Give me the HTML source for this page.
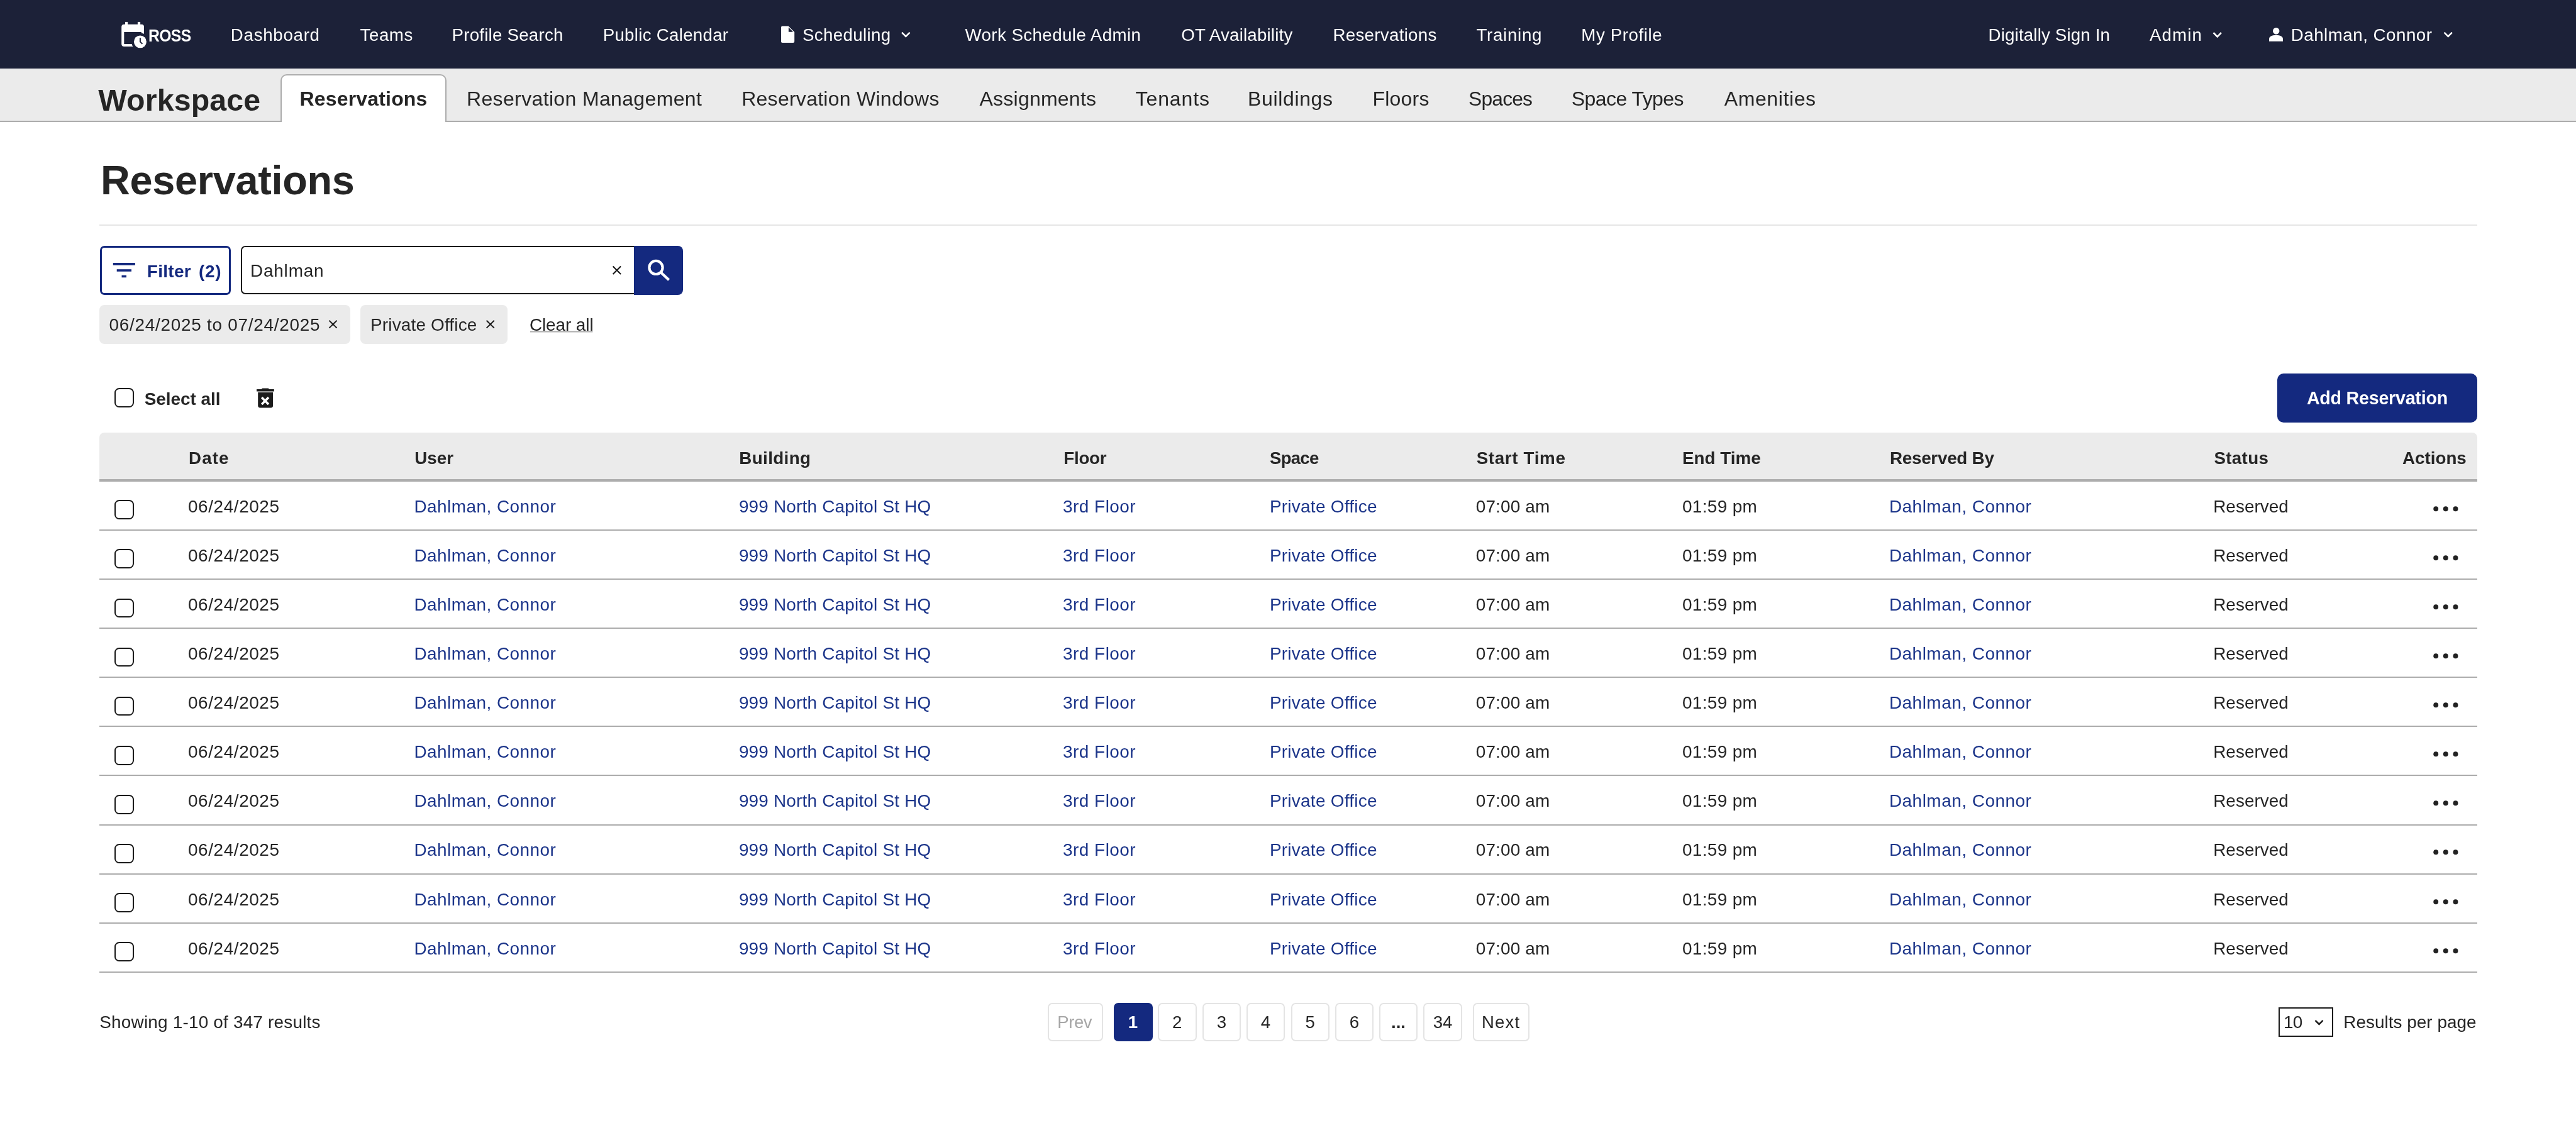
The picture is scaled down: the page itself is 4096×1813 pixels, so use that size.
<!DOCTYPE html>
<html><head><meta charset="utf-8"><title>Reservations</title>
<style>
html,body{margin:0;padding:0}
body{width:4096px;height:1813px;position:relative;overflow:hidden;background:#fff;font-family:"Liberation Sans",sans-serif}
.t{position:absolute;line-height:1;white-space:nowrap;transform-origin:0 0}
.r{position:absolute;box-sizing:border-box}
.cb{position:absolute;box-sizing:border-box;width:30.7px;height:30.8px;border:2px solid #1b1b1b;border-radius:7.5px;background:#fff}
.sep{position:absolute;left:158.2px;width:3780.8px;height:2px;background:#acacac}
.dots{position:absolute;fill:#222}
.pb{position:absolute;box-sizing:border-box;top:1595px;height:61px;border:2px solid #e4e4e4;border-radius:7px;background:#fff}
.pn{position:absolute;top:1595px;height:61px;line-height:61px;text-align:center;font-size:27.6px}
svg{position:absolute;overflow:visible}
</style></head>
<body>
<!-- header -->
<div class="r" style="left:0;top:0;width:4096px;height:109.3px;background:#1c2138"></div>
<!-- subnav -->
<div class="r" style="left:0;top:109.3px;width:4096px;height:84.7px;background:#ebebeb"></div>
<div class="r" style="left:0;top:192px;width:4096px;height:2px;background:#adadad"></div>
<div class="r" style="left:446.4px;top:117.5px;width:264px;height:76.5px;background:#fff;border:2px solid #adadad;border-bottom:none;border-radius:10px 10px 0 0"></div>

<!-- logo -->
<svg style="left:0;top:0" width="260" height="100" viewBox="0 0 260 100">
  <path fill="#fff" fill-rule="evenodd" d="M197.2,38.8 H225 a4,4 0 0 1 4,4 V70.1 a4,4 0 0 1 -4,4 H197.2 a4,4 0 0 1 -4,-4 V42.8 a4,4 0 0 1 4,-4 Z M197.3,51.05 V69.9 H224.8 V51.05 Z"/>
  <rect fill="#fff" x="199" y="34.9" width="4.1" height="5"/>
  <rect fill="#fff" x="218.9" y="34.9" width="4.2" height="5"/>
  <circle fill="#1c2138" cx="222.9" cy="66.4" r="13.8"/>
  <circle fill="#fff" cx="222.9" cy="66.4" r="9.95"/>
  <path fill="none" stroke="#1c2138" stroke-width="2" d="M222.9,60.3 V66.4 L226.4,69.9"/>
</svg>
<!-- doc icon -->
<svg style="left:0;top:0" width="1500" height="100" viewBox="0 0 1500 100">
  <path fill="#fff" d="M1244,41.5 H1253.6 L1263.2,51 V65.9 a2,2 0 0 1 -2,2 H1244 a2,2 0 0 1 -2,-2 V43.5 a2,2 0 0 1 2,-2 Z"/>
  <path fill="#1c2138" d="M1253.9,43.6 V50.8 H1261.1 Z"/>
  <polyline fill="none" stroke="#fff" stroke-width="2.6" points="1434,51.6 1440.3,58 1446.6,51.6"/>
</svg>
<svg style="left:3400px;top:0" width="600" height="100" viewBox="3400 0 600 100">
  <polyline fill="none" stroke="#fff" stroke-width="2.6" points="3519.5,52 3525.7,58.3 3531.9,52"/>
  <polyline fill="none" stroke="#fff" stroke-width="2.6" points="3886.5,51.7 3892.7,58 3898.9,51.7"/>
  <circle fill="#fff" cx="3619.2" cy="49.3" r="5.2"/>
  <path fill="#fff" d="M3608,65.7 V62.5 Q3608,55.7 3619,55.7 Q3630,55.7 3630,62.5 V65.7 Z"/>
</svg>

<!-- hr -->
<div class="r" style="left:158.2px;top:357.2px;width:3780.8px;height:2px;background:#e6e6e6"></div>

<!-- filter button -->
<div class="r" style="left:158.5px;top:390.9px;width:208.5px;height:77.9px;border:3.4px solid #14297f;border-radius:7px"></div>
<svg style="left:0;top:0" width="1100" height="480" viewBox="0 0 1100 480">
  <rect fill="#14297f" x="179.8" y="418" width="35.1" height="3.9"/>
  <rect fill="#14297f" x="185.7" y="428.2" width="23.3" height="3.6"/>
  <rect fill="#14297f" x="193.5" y="437.8" width="7.5" height="3.5"/>
</svg>
<!-- search input -->
<div class="r" style="left:383.4px;top:391.2px;width:640px;height:77.3px;border:2px solid #1b1b1b;border-radius:7px 0 0 7px"></div>
<div class="r" style="left:1008.3px;top:391px;width:78.1px;height:77.6px;background:#14297f;border-radius:0 8px 8px 0"></div>
<svg style="left:0;top:0" width="1100" height="480" viewBox="0 0 1100 480">
  <path fill="none" stroke="#1b1b1b" stroke-width="2.1" d="M974.6,423.6 L987.1,436 M987.1,423.6 L974.6,436"/>
  <circle fill="none" stroke="#fff" stroke-width="4.2" cx="1043" cy="425.4" r="10.6"/>
  <path fill="none" stroke="#fff" stroke-width="4.3" d="M1050.8,433.2 L1063.6,445.2"/>
</svg>

<!-- chips -->
<div class="r" style="left:158.2px;top:484.8px;width:398.6px;height:61.9px;background:#ebebeb;border-radius:8px"></div>
<div class="r" style="left:572.7px;top:484.8px;width:234.3px;height:61.9px;background:#ebebeb;border-radius:8px"></div>
<svg style="left:0;top:0" width="1100" height="560" viewBox="0 0 1100 560">
  <path fill="none" stroke="#1b1b1b" stroke-width="2" d="M523.4,509.8 L535.6,521.6 M535.6,509.8 L523.4,521.6"/>
  <path fill="none" stroke="#1b1b1b" stroke-width="2" d="M773.6,509.8 L785.8,521.6 M785.8,509.8 L773.6,521.6"/>
  <rect fill="#adadad" x="842.9" y="526.5" width="99.5" height="2"/>
</svg>

<!-- select all -->
<div class="cb" style="left:182px;top:617.4px"></div>
<svg style="left:0;top:0" width="500" height="700" viewBox="0 0 500 700">
  <path fill="#1b1b1b" d="M417.5,617.4 H426.3 a1.5,1.5 0 0 1 1.5,1.6 H435.8 V622.6 H408 V619 H416 a1.5,1.5 0 0 1 1.5,-1.6 Z"/>
  <path fill="#1b1b1b" d="M410.2,624.1 H434.1 V645 a3.4,3.4 0 0 1 -3.4,3.4 H413.6 a3.4,3.4 0 0 1 -3.4,-3.4 Z"/>
  <path fill="none" stroke="#fff" stroke-width="3.6" d="M416.2,632.1 L427,642.9 M427,632.1 L416.2,642.9"/>
</svg>
<!-- add reservation -->
<div class="r" style="left:3621px;top:594px;width:318px;height:78px;background:#14297f;border-radius:10px"></div>

<!-- table header -->
<div class="r" style="left:158.2px;top:687.6px;width:3780.8px;height:74.5px;background:#ebebeb;border-radius:8px 8px 0 0"></div>
<div class="r" style="left:158.2px;top:762.1px;width:3780.8px;height:3.6px;background:#adadad"></div>
<div class="cb" style="left:182px;top:795.2px"></div>
<div class="sep" style="top:841.8px"></div>
<svg class="dots" style="left:3866px;top:802.5px" width="46" height="12" viewBox="0 0 46 12"><circle cx="7.2" cy="6.3" r="3.95"/><circle cx="22.8" cy="6.3" r="3.95"/><circle cx="38.5" cy="6.3" r="3.95"/></svg>
<div class="cb" style="left:182px;top:873.3px"></div>
<div class="sep" style="top:919.9px"></div>
<svg class="dots" style="left:3866px;top:880.6px" width="46" height="12" viewBox="0 0 46 12"><circle cx="7.2" cy="6.3" r="3.95"/><circle cx="22.8" cy="6.3" r="3.95"/><circle cx="38.5" cy="6.3" r="3.95"/></svg>
<div class="cb" style="left:182px;top:951.5px"></div>
<div class="sep" style="top:998.1px"></div>
<svg class="dots" style="left:3866px;top:958.8px" width="46" height="12" viewBox="0 0 46 12"><circle cx="7.2" cy="6.3" r="3.95"/><circle cx="22.8" cy="6.3" r="3.95"/><circle cx="38.5" cy="6.3" r="3.95"/></svg>
<div class="cb" style="left:182px;top:1029.6px"></div>
<div class="sep" style="top:1076.2px"></div>
<svg class="dots" style="left:3866px;top:1036.9px" width="46" height="12" viewBox="0 0 46 12"><circle cx="7.2" cy="6.3" r="3.95"/><circle cx="22.8" cy="6.3" r="3.95"/><circle cx="38.5" cy="6.3" r="3.95"/></svg>
<div class="cb" style="left:182px;top:1107.7px"></div>
<div class="sep" style="top:1154.3px"></div>
<svg class="dots" style="left:3866px;top:1115.0px" width="46" height="12" viewBox="0 0 46 12"><circle cx="7.2" cy="6.3" r="3.95"/><circle cx="22.8" cy="6.3" r="3.95"/><circle cx="38.5" cy="6.3" r="3.95"/></svg>
<div class="cb" style="left:182px;top:1185.8px"></div>
<div class="sep" style="top:1232.4px"></div>
<svg class="dots" style="left:3866px;top:1193.2px" width="46" height="12" viewBox="0 0 46 12"><circle cx="7.2" cy="6.3" r="3.95"/><circle cx="22.8" cy="6.3" r="3.95"/><circle cx="38.5" cy="6.3" r="3.95"/></svg>
<div class="cb" style="left:182px;top:1264.0px"></div>
<div class="sep" style="top:1310.6px"></div>
<svg class="dots" style="left:3866px;top:1271.3px" width="46" height="12" viewBox="0 0 46 12"><circle cx="7.2" cy="6.3" r="3.95"/><circle cx="22.8" cy="6.3" r="3.95"/><circle cx="38.5" cy="6.3" r="3.95"/></svg>
<div class="cb" style="left:182px;top:1342.1px"></div>
<div class="sep" style="top:1388.7px"></div>
<svg class="dots" style="left:3866px;top:1349.4px" width="46" height="12" viewBox="0 0 46 12"><circle cx="7.2" cy="6.3" r="3.95"/><circle cx="22.8" cy="6.3" r="3.95"/><circle cx="38.5" cy="6.3" r="3.95"/></svg>
<div class="cb" style="left:182px;top:1420.2px"></div>
<div class="sep" style="top:1466.8px"></div>
<svg class="dots" style="left:3866px;top:1427.5px" width="46" height="12" viewBox="0 0 46 12"><circle cx="7.2" cy="6.3" r="3.95"/><circle cx="22.8" cy="6.3" r="3.95"/><circle cx="38.5" cy="6.3" r="3.95"/></svg>
<div class="cb" style="left:182px;top:1498.4px"></div>
<div class="sep" style="top:1545.0px"></div>
<svg class="dots" style="left:3866px;top:1505.7px" width="46" height="12" viewBox="0 0 46 12"><circle cx="7.2" cy="6.3" r="3.95"/><circle cx="22.8" cy="6.3" r="3.95"/><circle cx="38.5" cy="6.3" r="3.95"/></svg>

<!-- pagination -->
<div class="pb" style="left:1665.5px;width:88.5px"></div>
<div class="pb" style="left:1770.5px;width:62.1px;background:#14297f;border-color:#14297f"></div>
<div class="pb" style="left:1841.0px;width:61.5px"></div>
<div class="pb" style="left:1912.0px;width:61.0px"></div>
<div class="pb" style="left:1982.0px;width:61.0px"></div>
<div class="pb" style="left:2052.5px;width:61.2px"></div>
<div class="pb" style="left:2122.7px;width:61.3px"></div>
<div class="pb" style="left:2193.0px;width:61.0px"></div>
<div class="pb" style="left:2263.0px;width:62.0px"></div>
<div class="pb" style="left:2342.0px;width:90.0px"></div>
<div class="r" style="left:3623.2px;top:1602.1px;width:87.3px;height:46.5px;border:2px solid #1b1b1b"></div>
<svg style="left:0;top:0" width="4096" height="1813" viewBox="0 0 4096 1813">
  <polyline fill="none" stroke="#1b1b1b" stroke-width="2.6" points="3681.5,1622.8 3687.5,1628.8 3693.5,1622.8"/>
</svg>

<div style="position:absolute;left:0;top:0;width:4096px;height:1813px;will-change:transform">
<div class="t" style="left:235.6px;top:42.6px;font-size:27.33px;letter-spacing:-0.68px;color:#ffffff;font-weight:700;transform:scaleX(0.9047)">ROSS</div>
<div class="t" style="left:366.8px;top:42.4px;font-size:27.69px;letter-spacing:0.72px;color:#ffffff;font-weight:400">Dashboard</div>
<div class="t" style="left:572.6px;top:42.4px;font-size:27.69px;letter-spacing:0.52px;color:#ffffff;font-weight:400">Teams</div>
<div class="t" style="left:718.5px;top:42.4px;font-size:27.69px;letter-spacing:0.23px;color:#ffffff;font-weight:400">Profile Search</div>
<div class="t" style="left:958.7px;top:42.4px;font-size:27.69px;letter-spacing:0.28px;color:#ffffff;font-weight:400">Public Calendar</div>
<div class="t" style="left:1275.9px;top:42.4px;font-size:27.69px;letter-spacing:0.37px;color:#ffffff;font-weight:400">Scheduling</div>
<div class="t" style="left:1534.5px;top:42.4px;font-size:27.69px;letter-spacing:0.42px;color:#ffffff;font-weight:400">Work Schedule Admin</div>
<div class="t" style="left:1878.2px;top:42.4px;font-size:27.69px;letter-spacing:0.19px;color:#ffffff;font-weight:400">OT Availability</div>
<div class="t" style="left:2119.4px;top:42.4px;font-size:27.69px;letter-spacing:0.31px;color:#ffffff;font-weight:400">Reservations</div>
<div class="t" style="left:2347.4px;top:42.4px;font-size:27.69px;letter-spacing:0.73px;color:#ffffff;font-weight:400">Training</div>
<div class="t" style="left:2514.3px;top:42.4px;font-size:27.69px;letter-spacing:0.59px;color:#ffffff;font-weight:400">My Profile</div>
<div class="t" style="left:3161.6px;top:42.4px;font-size:27.69px;letter-spacing:0.16px;color:#ffffff;font-weight:400">Digitally Sign In</div>
<div class="t" style="left:3418.0px;top:42.4px;font-size:27.69px;letter-spacing:1.10px;color:#ffffff;font-weight:400">Admin</div>
<div class="t" style="left:3642.8px;top:42.4px;font-size:27.69px;letter-spacing:0.51px;color:#ffffff;font-weight:400">Dahlman, Connor</div>
<div class="t" style="left:156.3px;top:134.6px;font-size:48.26px;letter-spacing:0.15px;color:#252525;font-weight:700">Workspace</div>
<div class="t" style="left:476.6px;top:141.4px;font-size:31.98px;letter-spacing:0.18px;color:#252525;font-weight:700">Reservations</div>
<div class="t" style="left:742.0px;top:141.4px;font-size:31.98px;letter-spacing:0.37px;color:#252525;font-weight:400">Reservation Management</div>
<div class="t" style="left:1179.2px;top:141.4px;font-size:31.98px;letter-spacing:0.28px;color:#252525;font-weight:400">Reservation Windows</div>
<div class="t" style="left:1557.5px;top:141.4px;font-size:31.98px;letter-spacing:0.25px;color:#252525;font-weight:400">Assignments</div>
<div class="t" style="left:1805.6px;top:141.4px;font-size:31.98px;letter-spacing:0.90px;color:#252525;font-weight:400">Tenants</div>
<div class="t" style="left:1984.0px;top:141.4px;font-size:31.98px;letter-spacing:0.66px;color:#252525;font-weight:400">Buildings</div>
<div class="t" style="left:2182.4px;top:141.4px;font-size:31.98px;letter-spacing:0.25px;color:#252525;font-weight:400">Floors</div>
<div class="t" style="left:2334.8px;top:141.4px;font-size:31.98px;letter-spacing:-0.80px;color:#252525;font-weight:400;transform:scaleX(0.9936)">Spaces</div>
<div class="t" style="left:2498.8px;top:141.4px;font-size:31.98px;letter-spacing:-0.55px;color:#252525;font-weight:400">Space Types</div>
<div class="t" style="left:2741.7px;top:141.4px;font-size:31.98px;letter-spacing:0.62px;color:#252525;font-weight:400">Amenities</div>
<div class="t" style="left:159.9px;top:254.5px;font-size:64.83px;letter-spacing:-0.29px;color:#252525;font-weight:700">Reservations</div>
<div class="t" style="left:233.8px;top:417.5px;font-size:27.91px;letter-spacing:0.31px;color:#14297f;font-weight:700">Filter</div>
<div class="t" style="left:315.9px;top:417.5px;font-size:27.91px;letter-spacing:0.79px;color:#14297f;font-weight:700">(2)</div>
<div class="t" style="left:398.0px;top:417.3px;font-size:27.91px;letter-spacing:0.81px;color:#252525;font-weight:400">Dahlman</div>
<div class="t" style="left:173.5px;top:502.5px;font-size:27.91px;letter-spacing:0.73px;color:#252525;font-weight:400">06/24/2025 to 07/24/2025</div>
<div class="t" style="left:589.0px;top:502.5px;font-size:27.91px;letter-spacing:0.18px;color:#252525;font-weight:400">Private Office</div>
<div class="t" style="left:841.9px;top:502.5px;font-size:27.91px;letter-spacing:-0.08px;color:#252525;font-weight:400">Clear all</div>
<div class="t" style="left:229.7px;top:620.7px;font-size:27.91px;letter-spacing:-0.02px;color:#252525;font-weight:700">Select all</div>
<div class="t" style="left:3667.9px;top:619.4px;font-size:28.63px;letter-spacing:-0.23px;color:#ffffff;font-weight:700">Add Reservation</div>
<div class="t" style="left:300.1px;top:714.5px;font-size:27.76px;letter-spacing:1.03px;color:#252525;font-weight:700">Date</div>
<div class="t" style="left:659.2px;top:714.5px;font-size:27.76px;letter-spacing:0.03px;color:#252525;font-weight:700">User</div>
<div class="t" style="left:1175.3px;top:714.5px;font-size:27.76px;letter-spacing:0.38px;color:#252525;font-weight:700">Building</div>
<div class="t" style="left:1691.3px;top:714.5px;font-size:27.76px;letter-spacing:-0.27px;color:#252525;font-weight:700">Floor</div>
<div class="t" style="left:2019.2px;top:714.5px;font-size:27.76px;letter-spacing:-0.69px;color:#252525;font-weight:700;transform:scaleX(0.9904)">Space</div>
<div class="t" style="left:2347.7px;top:714.5px;font-size:27.76px;letter-spacing:0.66px;color:#252525;font-weight:700">Start Time</div>
<div class="t" style="left:2675.0px;top:714.5px;font-size:27.76px;letter-spacing:0.05px;color:#252525;font-weight:700">End Time</div>
<div class="t" style="left:3004.9px;top:714.5px;font-size:27.76px;letter-spacing:-0.22px;color:#252525;font-weight:700">Reserved By</div>
<div class="t" style="left:3520.4px;top:714.5px;font-size:27.76px;letter-spacing:0.34px;color:#252525;font-weight:700">Status</div>
<div class="t" style="left:3820.0px;top:714.5px;font-size:27.76px;letter-spacing:-0.00px;color:#252525;font-weight:700">Actions</div>
<div class="t" style="left:299.0px;top:791.5px;font-size:27.91px;letter-spacing:0.59px;color:#252525;font-weight:400">06/24/2025</div>
<div class="t" style="left:658.4px;top:791.5px;font-size:27.91px;letter-spacing:0.48px;color:#1c358a;font-weight:400">Dahlman, Connor</div>
<div class="t" style="left:1174.9px;top:791.5px;font-size:27.91px;letter-spacing:0.20px;color:#1c358a;font-weight:400">999 North Capitol St HQ</div>
<div class="t" style="left:1690.0px;top:791.5px;font-size:27.91px;letter-spacing:0.50px;color:#1c358a;font-weight:400">3rd Floor</div>
<div class="t" style="left:2018.9px;top:791.5px;font-size:27.91px;letter-spacing:0.28px;color:#1c358a;font-weight:400">Private Office</div>
<div class="t" style="left:2346.7px;top:791.5px;font-size:27.91px;letter-spacing:0.17px;color:#252525;font-weight:400">07:00 am</div>
<div class="t" style="left:2675.0px;top:791.5px;font-size:27.91px;letter-spacing:0.34px;color:#252525;font-weight:400">01:59 pm</div>
<div class="t" style="left:3003.9px;top:791.5px;font-size:27.91px;letter-spacing:0.52px;color:#1c358a;font-weight:400">Dahlman, Connor</div>
<div class="t" style="left:3519.2px;top:791.5px;font-size:27.91px;letter-spacing:0.03px;color:#252525;font-weight:400">Reserved</div>
<div class="t" style="left:299.0px;top:869.6px;font-size:27.91px;letter-spacing:0.59px;color:#252525;font-weight:400">06/24/2025</div>
<div class="t" style="left:658.4px;top:869.6px;font-size:27.91px;letter-spacing:0.48px;color:#1c358a;font-weight:400">Dahlman, Connor</div>
<div class="t" style="left:1174.9px;top:869.6px;font-size:27.91px;letter-spacing:0.20px;color:#1c358a;font-weight:400">999 North Capitol St HQ</div>
<div class="t" style="left:1690.0px;top:869.6px;font-size:27.91px;letter-spacing:0.50px;color:#1c358a;font-weight:400">3rd Floor</div>
<div class="t" style="left:2018.9px;top:869.6px;font-size:27.91px;letter-spacing:0.28px;color:#1c358a;font-weight:400">Private Office</div>
<div class="t" style="left:2346.7px;top:869.6px;font-size:27.91px;letter-spacing:0.17px;color:#252525;font-weight:400">07:00 am</div>
<div class="t" style="left:2675.0px;top:869.6px;font-size:27.91px;letter-spacing:0.34px;color:#252525;font-weight:400">01:59 pm</div>
<div class="t" style="left:3003.9px;top:869.6px;font-size:27.91px;letter-spacing:0.52px;color:#1c358a;font-weight:400">Dahlman, Connor</div>
<div class="t" style="left:3519.2px;top:869.6px;font-size:27.91px;letter-spacing:0.03px;color:#252525;font-weight:400">Reserved</div>
<div class="t" style="left:299.0px;top:947.7px;font-size:27.91px;letter-spacing:0.59px;color:#252525;font-weight:400">06/24/2025</div>
<div class="t" style="left:658.4px;top:947.7px;font-size:27.91px;letter-spacing:0.48px;color:#1c358a;font-weight:400">Dahlman, Connor</div>
<div class="t" style="left:1174.9px;top:947.7px;font-size:27.91px;letter-spacing:0.20px;color:#1c358a;font-weight:400">999 North Capitol St HQ</div>
<div class="t" style="left:1690.0px;top:947.7px;font-size:27.91px;letter-spacing:0.50px;color:#1c358a;font-weight:400">3rd Floor</div>
<div class="t" style="left:2018.9px;top:947.7px;font-size:27.91px;letter-spacing:0.28px;color:#1c358a;font-weight:400">Private Office</div>
<div class="t" style="left:2346.7px;top:947.7px;font-size:27.91px;letter-spacing:0.17px;color:#252525;font-weight:400">07:00 am</div>
<div class="t" style="left:2675.0px;top:947.7px;font-size:27.91px;letter-spacing:0.34px;color:#252525;font-weight:400">01:59 pm</div>
<div class="t" style="left:3003.9px;top:947.7px;font-size:27.91px;letter-spacing:0.52px;color:#1c358a;font-weight:400">Dahlman, Connor</div>
<div class="t" style="left:3519.2px;top:947.7px;font-size:27.91px;letter-spacing:0.03px;color:#252525;font-weight:400">Reserved</div>
<div class="t" style="left:299.0px;top:1025.9px;font-size:27.91px;letter-spacing:0.59px;color:#252525;font-weight:400">06/24/2025</div>
<div class="t" style="left:658.4px;top:1025.9px;font-size:27.91px;letter-spacing:0.48px;color:#1c358a;font-weight:400">Dahlman, Connor</div>
<div class="t" style="left:1174.9px;top:1025.9px;font-size:27.91px;letter-spacing:0.20px;color:#1c358a;font-weight:400">999 North Capitol St HQ</div>
<div class="t" style="left:1690.0px;top:1025.9px;font-size:27.91px;letter-spacing:0.50px;color:#1c358a;font-weight:400">3rd Floor</div>
<div class="t" style="left:2018.9px;top:1025.9px;font-size:27.91px;letter-spacing:0.28px;color:#1c358a;font-weight:400">Private Office</div>
<div class="t" style="left:2346.7px;top:1025.9px;font-size:27.91px;letter-spacing:0.17px;color:#252525;font-weight:400">07:00 am</div>
<div class="t" style="left:2675.0px;top:1025.9px;font-size:27.91px;letter-spacing:0.34px;color:#252525;font-weight:400">01:59 pm</div>
<div class="t" style="left:3003.9px;top:1025.9px;font-size:27.91px;letter-spacing:0.52px;color:#1c358a;font-weight:400">Dahlman, Connor</div>
<div class="t" style="left:3519.2px;top:1025.9px;font-size:27.91px;letter-spacing:0.03px;color:#252525;font-weight:400">Reserved</div>
<div class="t" style="left:299.0px;top:1104.0px;font-size:27.91px;letter-spacing:0.59px;color:#252525;font-weight:400">06/24/2025</div>
<div class="t" style="left:658.4px;top:1104.0px;font-size:27.91px;letter-spacing:0.48px;color:#1c358a;font-weight:400">Dahlman, Connor</div>
<div class="t" style="left:1174.9px;top:1104.0px;font-size:27.91px;letter-spacing:0.20px;color:#1c358a;font-weight:400">999 North Capitol St HQ</div>
<div class="t" style="left:1690.0px;top:1104.0px;font-size:27.91px;letter-spacing:0.50px;color:#1c358a;font-weight:400">3rd Floor</div>
<div class="t" style="left:2018.9px;top:1104.0px;font-size:27.91px;letter-spacing:0.28px;color:#1c358a;font-weight:400">Private Office</div>
<div class="t" style="left:2346.7px;top:1104.0px;font-size:27.91px;letter-spacing:0.17px;color:#252525;font-weight:400">07:00 am</div>
<div class="t" style="left:2675.0px;top:1104.0px;font-size:27.91px;letter-spacing:0.34px;color:#252525;font-weight:400">01:59 pm</div>
<div class="t" style="left:3003.9px;top:1104.0px;font-size:27.91px;letter-spacing:0.52px;color:#1c358a;font-weight:400">Dahlman, Connor</div>
<div class="t" style="left:3519.2px;top:1104.0px;font-size:27.91px;letter-spacing:0.03px;color:#252525;font-weight:400">Reserved</div>
<div class="t" style="left:299.0px;top:1182.1px;font-size:27.91px;letter-spacing:0.59px;color:#252525;font-weight:400">06/24/2025</div>
<div class="t" style="left:658.4px;top:1182.1px;font-size:27.91px;letter-spacing:0.48px;color:#1c358a;font-weight:400">Dahlman, Connor</div>
<div class="t" style="left:1174.9px;top:1182.1px;font-size:27.91px;letter-spacing:0.20px;color:#1c358a;font-weight:400">999 North Capitol St HQ</div>
<div class="t" style="left:1690.0px;top:1182.1px;font-size:27.91px;letter-spacing:0.50px;color:#1c358a;font-weight:400">3rd Floor</div>
<div class="t" style="left:2018.9px;top:1182.1px;font-size:27.91px;letter-spacing:0.28px;color:#1c358a;font-weight:400">Private Office</div>
<div class="t" style="left:2346.7px;top:1182.1px;font-size:27.91px;letter-spacing:0.17px;color:#252525;font-weight:400">07:00 am</div>
<div class="t" style="left:2675.0px;top:1182.1px;font-size:27.91px;letter-spacing:0.34px;color:#252525;font-weight:400">01:59 pm</div>
<div class="t" style="left:3003.9px;top:1182.1px;font-size:27.91px;letter-spacing:0.52px;color:#1c358a;font-weight:400">Dahlman, Connor</div>
<div class="t" style="left:3519.2px;top:1182.1px;font-size:27.91px;letter-spacing:0.03px;color:#252525;font-weight:400">Reserved</div>
<div class="t" style="left:299.0px;top:1260.2px;font-size:27.91px;letter-spacing:0.59px;color:#252525;font-weight:400">06/24/2025</div>
<div class="t" style="left:658.4px;top:1260.2px;font-size:27.91px;letter-spacing:0.48px;color:#1c358a;font-weight:400">Dahlman, Connor</div>
<div class="t" style="left:1174.9px;top:1260.2px;font-size:27.91px;letter-spacing:0.20px;color:#1c358a;font-weight:400">999 North Capitol St HQ</div>
<div class="t" style="left:1690.0px;top:1260.2px;font-size:27.91px;letter-spacing:0.50px;color:#1c358a;font-weight:400">3rd Floor</div>
<div class="t" style="left:2018.9px;top:1260.2px;font-size:27.91px;letter-spacing:0.28px;color:#1c358a;font-weight:400">Private Office</div>
<div class="t" style="left:2346.7px;top:1260.2px;font-size:27.91px;letter-spacing:0.17px;color:#252525;font-weight:400">07:00 am</div>
<div class="t" style="left:2675.0px;top:1260.2px;font-size:27.91px;letter-spacing:0.34px;color:#252525;font-weight:400">01:59 pm</div>
<div class="t" style="left:3003.9px;top:1260.2px;font-size:27.91px;letter-spacing:0.52px;color:#1c358a;font-weight:400">Dahlman, Connor</div>
<div class="t" style="left:3519.2px;top:1260.2px;font-size:27.91px;letter-spacing:0.03px;color:#252525;font-weight:400">Reserved</div>
<div class="t" style="left:299.0px;top:1338.4px;font-size:27.91px;letter-spacing:0.59px;color:#252525;font-weight:400">06/24/2025</div>
<div class="t" style="left:658.4px;top:1338.4px;font-size:27.91px;letter-spacing:0.48px;color:#1c358a;font-weight:400">Dahlman, Connor</div>
<div class="t" style="left:1174.9px;top:1338.4px;font-size:27.91px;letter-spacing:0.20px;color:#1c358a;font-weight:400">999 North Capitol St HQ</div>
<div class="t" style="left:1690.0px;top:1338.4px;font-size:27.91px;letter-spacing:0.50px;color:#1c358a;font-weight:400">3rd Floor</div>
<div class="t" style="left:2018.9px;top:1338.4px;font-size:27.91px;letter-spacing:0.28px;color:#1c358a;font-weight:400">Private Office</div>
<div class="t" style="left:2346.7px;top:1338.4px;font-size:27.91px;letter-spacing:0.17px;color:#252525;font-weight:400">07:00 am</div>
<div class="t" style="left:2675.0px;top:1338.4px;font-size:27.91px;letter-spacing:0.34px;color:#252525;font-weight:400">01:59 pm</div>
<div class="t" style="left:3003.9px;top:1338.4px;font-size:27.91px;letter-spacing:0.52px;color:#1c358a;font-weight:400">Dahlman, Connor</div>
<div class="t" style="left:3519.2px;top:1338.4px;font-size:27.91px;letter-spacing:0.03px;color:#252525;font-weight:400">Reserved</div>
<div class="t" style="left:299.0px;top:1416.5px;font-size:27.91px;letter-spacing:0.59px;color:#252525;font-weight:400">06/24/2025</div>
<div class="t" style="left:658.4px;top:1416.5px;font-size:27.91px;letter-spacing:0.48px;color:#1c358a;font-weight:400">Dahlman, Connor</div>
<div class="t" style="left:1174.9px;top:1416.5px;font-size:27.91px;letter-spacing:0.20px;color:#1c358a;font-weight:400">999 North Capitol St HQ</div>
<div class="t" style="left:1690.0px;top:1416.5px;font-size:27.91px;letter-spacing:0.50px;color:#1c358a;font-weight:400">3rd Floor</div>
<div class="t" style="left:2018.9px;top:1416.5px;font-size:27.91px;letter-spacing:0.28px;color:#1c358a;font-weight:400">Private Office</div>
<div class="t" style="left:2346.7px;top:1416.5px;font-size:27.91px;letter-spacing:0.17px;color:#252525;font-weight:400">07:00 am</div>
<div class="t" style="left:2675.0px;top:1416.5px;font-size:27.91px;letter-spacing:0.34px;color:#252525;font-weight:400">01:59 pm</div>
<div class="t" style="left:3003.9px;top:1416.5px;font-size:27.91px;letter-spacing:0.52px;color:#1c358a;font-weight:400">Dahlman, Connor</div>
<div class="t" style="left:3519.2px;top:1416.5px;font-size:27.91px;letter-spacing:0.03px;color:#252525;font-weight:400">Reserved</div>
<div class="t" style="left:299.0px;top:1494.6px;font-size:27.91px;letter-spacing:0.59px;color:#252525;font-weight:400">06/24/2025</div>
<div class="t" style="left:658.4px;top:1494.6px;font-size:27.91px;letter-spacing:0.48px;color:#1c358a;font-weight:400">Dahlman, Connor</div>
<div class="t" style="left:1174.9px;top:1494.6px;font-size:27.91px;letter-spacing:0.20px;color:#1c358a;font-weight:400">999 North Capitol St HQ</div>
<div class="t" style="left:1690.0px;top:1494.6px;font-size:27.91px;letter-spacing:0.50px;color:#1c358a;font-weight:400">3rd Floor</div>
<div class="t" style="left:2018.9px;top:1494.6px;font-size:27.91px;letter-spacing:0.28px;color:#1c358a;font-weight:400">Private Office</div>
<div class="t" style="left:2346.7px;top:1494.6px;font-size:27.91px;letter-spacing:0.17px;color:#252525;font-weight:400">07:00 am</div>
<div class="t" style="left:2675.0px;top:1494.6px;font-size:27.91px;letter-spacing:0.34px;color:#252525;font-weight:400">01:59 pm</div>
<div class="t" style="left:3003.9px;top:1494.6px;font-size:27.91px;letter-spacing:0.52px;color:#1c358a;font-weight:400">Dahlman, Connor</div>
<div class="t" style="left:3519.2px;top:1494.6px;font-size:27.91px;letter-spacing:0.03px;color:#252525;font-weight:400">Reserved</div>
<div class="t" style="left:158.3px;top:1611.9px;font-size:27.91px;letter-spacing:0.20px;color:#252525;font-weight:400">Showing 1-10 of 347 results</div>
<div class="t" style="left:3631.0px;top:1611.9px;font-size:27.91px;letter-spacing:-0.70px;color:#252525;font-weight:400">10</div>
<div class="t" style="left:3726.3px;top:1611.9px;font-size:27.91px;letter-spacing:0.02px;color:#252525;font-weight:400">Results per page</div>
<div class="t" style="left:1681.3px;top:1612.2px;font-size:27.47px;letter-spacing:-0.42px;color:#a6a6a6;font-weight:400">Prev</div>
<div class="t" style="left:2356.0px;top:1612.2px;font-size:27.47px;letter-spacing:1.22px;color:#252525;font-weight:400">Next</div>
<div class="pn" style="left:1770.5px;width:62.1px;color:#fff;font-weight:700">1</div>
<div class="pn" style="left:1841.0px;width:61.5px;color:#252525;font-weight:400">2</div>
<div class="pn" style="left:1912.0px;width:61.0px;color:#252525;font-weight:400">3</div>
<div class="pn" style="left:1982.0px;width:61.0px;color:#252525;font-weight:400">4</div>
<div class="pn" style="left:2052.5px;width:61.2px;color:#252525;font-weight:400">5</div>
<div class="pn" style="left:2122.7px;width:61.3px;color:#252525;font-weight:400">6</div>
<div class="pn" style="left:2193.0px;width:61.0px;color:#252525;font-weight:700">...</div>
<div class="pn" style="left:2263.0px;width:62.0px;color:#252525;font-weight:400">34</div>
</div>
</body></html>
